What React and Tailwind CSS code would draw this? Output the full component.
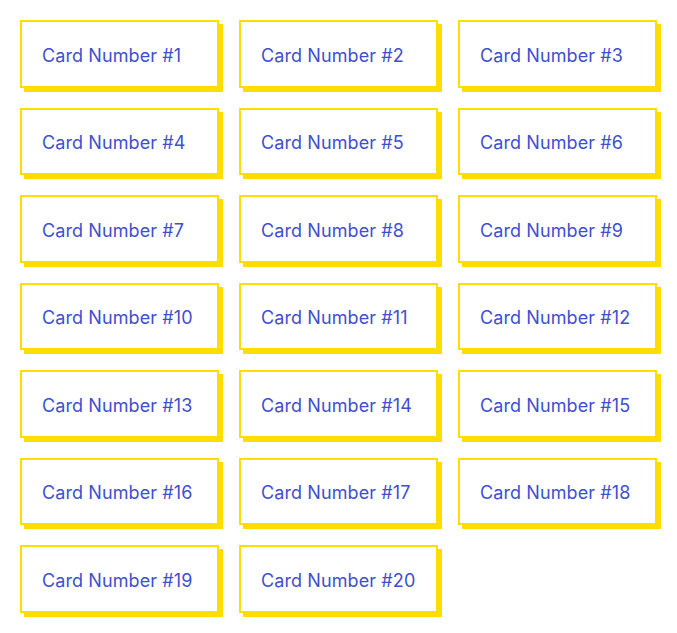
import React from "react";

const cards = Array.from({ length: 20 }, (_, i) => i + 1);

export default function App() {
  return (
    <div className="min-h-screen bg-white p-5" style={{ fontFamily: "Inter, 'Noto Sans', sans-serif" }}>
      <div className="grid grid-cols-3 gap-5">
        {cards.map((n) => (
          <div
            key={n}
            className="border-2 border-[#ffdd00] bg-white px-5 pt-[21.5px] pb-[18.5px] text-[18px] leading-[23.5px] tracking-[0.1px] text-[#3f4fd0] shadow-[4px_4px_0_#ffdd00]"
          >
            Card Number #{n}
          </div>
        ))}
      </div>
    </div>
  );
}
